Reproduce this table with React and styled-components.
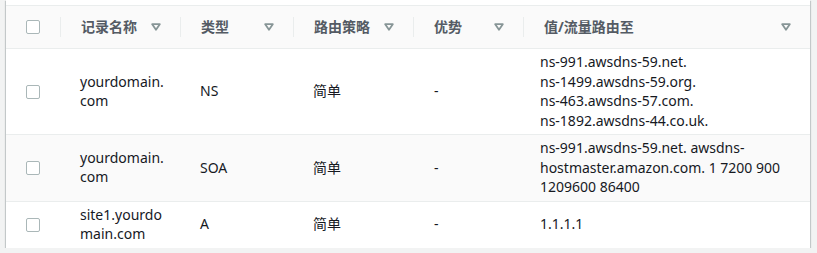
import React from 'react';
import styled, { createGlobalStyle } from 'styled-components';

const Global = createGlobalStyle`
  html, body { margin: 0; padding: 0; background: #f2f3f3; }
  body { font-family: "Noto Sans", "Noto Sans CJK SC", sans-serif; -webkit-font-smoothing: antialiased; }
`;

const Page = styled.div`
  padding: 0 7px 0 6px;
`;

const Card = styled.div`
  background: #fff;
  padding-top: 5px;
  box-shadow: 0 1px 1px 0 rgba(0, 28, 36, 0.3), 1px 1px 1px 0 rgba(0, 28, 36, 0.15),
    -1px 1px 1px 0 rgba(0, 28, 36, 0.15);
`;

const Table = styled.table`
  width: 100%;
  table-layout: fixed;
  border-collapse: collapse;
  font-size: 14px;
  color: #16191f;
`;

const HeadRow = styled.tr`
  background: #fafafa;
  border-top: 1px solid #eaeded;
  border-bottom: 1px solid #eaeded;
`;

const Th = styled.th`
  position: relative;
  height: 42px;
  padding: 0;
  text-align: left;
  font-weight: 700;
  color: #545b64;
  vertical-align: middle;
  &::before {
    content: ${(p) => (p.$sep ? "''" : 'none')};
    position: absolute;
    left: 0;
    top: 11px;
    width: 1px;
    height: 20px;
    background: #eaeded;
  }
`;

const HeadInner = styled.div`
  display: flex;
  align-items: center;
  justify-content: space-between;
  padding: 0 19px 0 21px;
  line-height: 20px;
`;

const Row = styled.tr`
  background: ${(p) => (p.$alt ? '#fafafa' : '#fff')};
  border-bottom: ${(p) => (p.$last ? 'none' : '1px solid #eaeded')};
`;

const Td = styled.td`
  padding: 3px 10px 4px ${(p) => p.$pl || 20}px;
  line-height: 19.5px;
  vertical-align: middle;
  overflow-wrap: anywhere;
`;

const BoxCell = styled.td`
  padding: 0 0 0 20px;
  vertical-align: middle;
`;

const BoxHead = styled.th`
  padding: 0 0 0 20px;
  vertical-align: middle;
  text-align: left;
`;

const Checkbox = styled.span`
  display: block;
  width: 12px;
  height: 12px;
  border: 1px solid #aab7b8;
  border-radius: 2px;
  background: #fff;
`;

const Caret = () => (
  <svg width="10" height="8" viewBox="0 0 10 8" aria-hidden="true">
    <polygon points="1.2,1.2 8.8,1.2 5,6.8" fill="none" stroke="#879596" strokeWidth="1.8" strokeLinejoin="round" />
  </svg>
);

const columns = ['记录名称', '类型', '路由策略', '优势', '值/流量路由至'];
const widths = [54, 120, 113, 120, 110, 287];

const rows = [
  {
    name: 'yourdomain.com',
    type: 'NS',
    policy: '简单',
    adv: '-',
    value: ['ns-991.awsdns-59.net.', 'ns-1499.awsdns-59.org.', 'ns-463.awsdns-57.com.', 'ns-1892.awsdns-44.co.uk.'],
  },
  {
    name: 'yourdomain.com',
    type: 'SOA',
    policy: '简单',
    adv: '-',
    value: ['ns-991.awsdns-59.net. awsdns-hostmaster.amazon.com. 1 7200 900 1209600 86400'],
  },
  { name: 'site1.yourdomain.com', type: 'A', policy: '简单', adv: '-', value: ['1.1.1.1'] },
];

const NameText = styled.div`
  width: 86px;
`;

export default function App() {
  return (
    <>
      <Global />
      <Page>
        <Card>
          <Table>
            <colgroup>
              {widths.map((w, i) => (
                <col key={i} style={{ width: w }} />
              ))}
            </colgroup>
            <thead>
              <HeadRow>
                <BoxHead>
                  <Checkbox />
                </BoxHead>
                {columns.map((c) => (
                  <Th key={c} $sep>
                    <HeadInner>
                      <span>{c}</span>
                      <Caret />
                    </HeadInner>
                  </Th>
                ))}
              </HeadRow>
            </thead>
            <tbody>
              {rows.map((r, i) => (
                <Row key={i} $alt={i === 1} $last={i === rows.length - 1}>
                  <BoxCell>
                    <Checkbox />
                  </BoxCell>
                  <Td>
                    <NameText>{r.name}</NameText>
                  </Td>
                  <Td>{r.type}</Td>
                  <Td>{r.policy}</Td>
                  <Td $pl={21}>{r.adv}</Td>
                  <Td $pl={17}>
                    {r.value.map((v) => (
                      <div key={v}>{v}</div>
                    ))}
                  </Td>
                </Row>
              ))}
            </tbody>
          </Table>
        </Card>
      </Page>
    </>
  );
}
